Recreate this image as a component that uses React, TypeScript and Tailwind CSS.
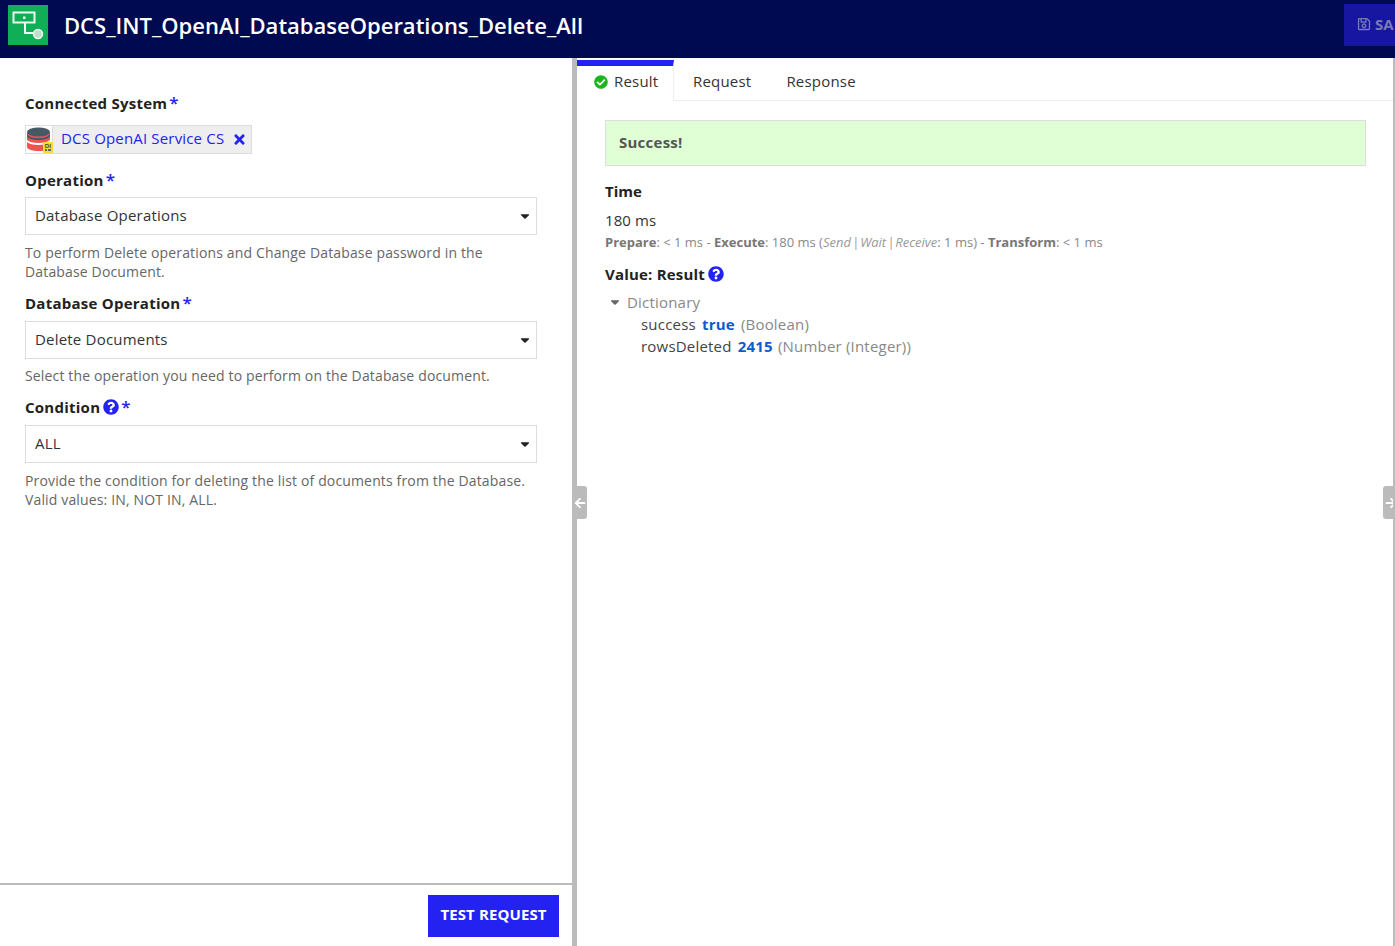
import { FaCheckCircle, FaQuestionCircle, FaTimes, FaCaretDown, FaArrowLeft, FaArrowRight, FaRegSave } from "react-icons/fa";

const Req = () => <span className="text-[#2322f0] font-semibold text-[17px] leading-[20px] ml-[2px]">*</span>;

function Field({ label, value, help, help2, q, top, selectTop, helpTop }: { label: string; value: string; help: string; help2?: string; q?: boolean; top: string; selectTop: string; helpTop: string }) {
  return (
    <div className={top}>
      <div className="flex items-center h-[20px] text-[15px] font-bold text-[#222] tracking-[0.25px]">
        {label}
        {q && <FaQuestionCircle className="text-[#2322f0] text-[16px] ml-[3px]" />}
        <Req />
      </div>
      <div className={`${selectTop} h-[38px] w-[512px] border border-[#ddd] flex items-center justify-between pl-[9px] pr-[4px] pb-[2px] text-[15px] text-[#333] tracking-[0.2px]`}>
        <span>{value}</span>
        <FaCaretDown className="text-[#222] text-[14px] mt-[2px]" />
      </div>
      <div className={`${helpTop} w-[512px] text-[14px] leading-[19px] text-[#666] tracking-[0.15px]`}>
        <div>{help}</div>
        {help2 && <div>{help2}</div>}
      </div>
    </div>
  );
}

function LogoIcon() {
  return (
    <svg width="40" height="40" viewBox="0 0 40 40" className="shrink-0">
      <rect width="40" height="40" fill="#0fae57" />
      <rect x="5.5" y="7.5" width="21" height="10" fill="none" stroke="#eef7f0" strokeWidth="2" />
      <rect x="15" y="11.5" width="2.5" height="2.5" fill="#eef7f0" />
      <path d="M17 18v10h8" fill="none" stroke="#eef7f0" strokeWidth="2" />
      <circle cx="30" cy="29" r="4.5" fill="#bfe0c8" stroke="#eef7f0" strokeWidth="1.5" />
    </svg>
  );
}

function DbIcon() {
  return (
    <svg width="27" height="27" viewBox="0 0 27 27" className="shrink-0">
      <path d="M1 6h23v15c0 2-5 4-11.500 4S1 23 1 21z" fill="#ef5350" />
      <path d="M1 14c2 2 6 3 11.500 3S22 16 24 14v2c-2 2-6 3-11.500 3S3 18 1 16z" fill="#fff" />
      <ellipse cx="12.500" cy="6" rx="11.500" ry="4.500" fill="#455a64" />
      <path d="M1 7c0 3 5 5 11.500 5S24 10 24 7v3c0 2-5 4-11.500 4S1 12 1 10z" fill="#455a64" />
      <rect x="17" y="16" width="10" height="11" rx="1" fill="#fdd835" />
      <text x="22" y="21.500" textAnchor="middle" fontSize="6" fontWeight="700" fontFamily="'Liberation Sans', sans-serif" fill="#444">DI</text>
      <rect x="19" y="23" width="2" height="2" fill="#666" />
      <rect x="22" y="23" width="3" height="2" fill="#666" />
    </svg>
  );
}

export default function App() {
  return (
    <div className="w-[1395px] h-[946px] overflow-hidden bg-white flex flex-col font-['Open_Sans',sans-serif]">
      <header className="h-[58px] shrink-0 bg-[#000a50] flex items-center overflow-hidden pb-[8px]">
        <div className="w-[1344px] shrink-0 flex items-center pl-[8px]">
          <LogoIcon />
          <h1 className="ml-[16px] text-[22px] font-semibold text-white leading-[28px]">DCS_INT_OpenAI_DatabaseOperations_Delete_All</h1>
        </div>
        <div className="shrink-0 w-[51px] h-[42px] bg-[#1716a0] flex items-center pl-[13px] pb-[2px] text-[15px] font-bold text-[#7a7ab8] overflow-hidden">
          <FaRegSave className="text-[14px] mr-[4px] shrink-0" />
          <span className="w-[20px] shrink-0 overflow-hidden">SA</span>
        </div>
      </header>

      <div className="flex-1 flex min-h-0">
        <div className="w-[572px] shrink-0 flex flex-col">
          <div className="flex-1 pl-[25px] pt-[35px]">
            <div className="flex items-center h-[20px] text-[15px] font-bold text-[#222] tracking-[0.25px]">Connected System<Req /></div>
            <div className="mt-[12px] w-[227px] flex items-center h-[29px] border border-[#ddd] bg-[#eee] text-[#2322f0] text-[15px] tracking-[0.17px]">
              <span className="w-[27px] h-full bg-white flex items-center justify-center border-r border-[#ddd]"><DbIcon /></span>
              <span className="ml-[8px] pb-[3px]">DCS OpenAI Service CS</span>
              <FaTimes className="ml-[8px] text-[15px]" />
            </div>
            <Field top="mt-[16px]" selectTop="mt-[7px]" helpTop="mt-[8px]" label="Operation" value="Database Operations" help="To perform Delete operations and Change Database password in the" help2="Database Document." />
            <Field top="mt-[12px]" selectTop="mt-[8px]" helpTop="mt-[7px]" label="Database Operation" value="Delete Documents" help="Select the operation you need to perform on the Database document." />
            <Field top="mt-[12px]" selectTop="mt-[8px]" helpTop="mt-[8px]" label="Condition" q value="ALL" help="Provide the condition for deleting the list of documents from the Database." help2="Valid values: IN, NOT IN, ALL." />
          </div>
          <div className="h-[63px] shrink-0 border-t-2 border-[#bbb] flex justify-end items-start pt-[10px] pr-[13px]">
            <button className="w-[131px] h-[42px] pb-[3px] bg-[#2322f0] text-white text-[15px] font-bold tracking-[0.1px]">TEST REQUEST</button>
          </div>
        </div>

        <div className="w-[5px] shrink-0 bg-[#bbb] relative">
          <div className="absolute left-[5px] top-[428px] w-[10px] h-[33px] bg-[#bbb] rounded-r-[3px] flex items-center justify-center">
            <FaArrowLeft className="text-white text-[12px] -ml-[4px] shrink-0" />
          </div>
        </div>

        <div className="flex-1 min-w-0 border-r-2 border-[#bbb] relative">
          <div className="absolute right-0 top-[428px] w-[10px] h-[33px] bg-[#bbb] rounded-l-[3px] flex items-center justify-center overflow-hidden">
            <FaArrowRight className="text-white text-[12px] ml-[6px] shrink-0" />
          </div>
          <div className="pt-[2px] h-[43px] border-b border-[#eee] flex items-stretch text-[15px] text-[#333] tracking-[0.2px]">
            <div className="w-[97px] border-t-[6px] border-[#2322f0] border-r border-r-[#eee] h-[41px] bg-white flex items-center pl-[17px] pb-[4px]">
              <FaCheckCircle className="text-[#1cb51c] text-[14px] mr-[6px] mt-[1px]" />
              Result
            </div>
            <div className="ml-[19px] pt-[3px] flex items-center">Request</div>
            <div className="ml-[35px] pt-[3px] flex items-center">Response</div>
          </div>
          <div className="pl-[28px] pr-[27px]">
            <div className="mt-[19px] h-[46px] bg-[#e0ffd4] border border-[#ddd] flex items-center pl-[13px] pb-[2px] text-[15px] font-bold text-[#555] tracking-[0.25px]">Success!</div>
            <div className="mt-[15px] h-[20px] flex items-center text-[15px] font-bold text-[#222]">Time</div>
            <div className="mt-[9px] h-[20px] flex items-center text-[15px] text-[#333] tracking-[0.1px]">180 ms</div>
            <div className="mt-[4px] h-[18px] flex items-center text-[13px] text-[#888] whitespace-pre">
              <b className="font-bold text-[#777]">Prepare</b>: &lt; 1 ms - <b className="font-bold text-[#777]">Execute</b>: 180 ms (<i className="text-[#999]">Send<span className="px-[1px]">|</span>Wait<span className="px-[1px]">|</span>Receive</i>: 1 ms) - <b className="font-bold text-[#777]">Transform</b>: &lt; 1 ms
            </div>
            <div className="mt-[12px] h-[20px] flex items-center text-[15px] font-bold text-[#222] tracking-[0.2px]">
              Value: Result
              <FaQuestionCircle className="text-[#2322f0] text-[16px] ml-[3px]" />
            </div>
            <div className="mt-[7px] text-[15px] leading-[22px] text-[#888] tracking-[0.2px]">
              <div className="flex items-center">
                <FaCaretDown className="ml-[3px] mr-[5px] text-[#666] text-[14px]" />
                Dictionary
              </div>
              <div className="pl-[36px]">
                <span className="text-[#444]">success</span> <b className="text-[#0d5bd0] font-bold ml-[2px]">true</b> <span className="ml-[2px]">(Boolean)</span>
              </div>
              <div className="pl-[36px]">
                <span className="text-[#444]">rowsDeleted</span> <b className="text-[#0d5bd0] font-bold ml-[2px]">2415</b> <span className="ml-[1px]">(Number (Integer))</span>
              </div>
            </div>
          </div>
        </div>
      </div>
    </div>
  );
}
